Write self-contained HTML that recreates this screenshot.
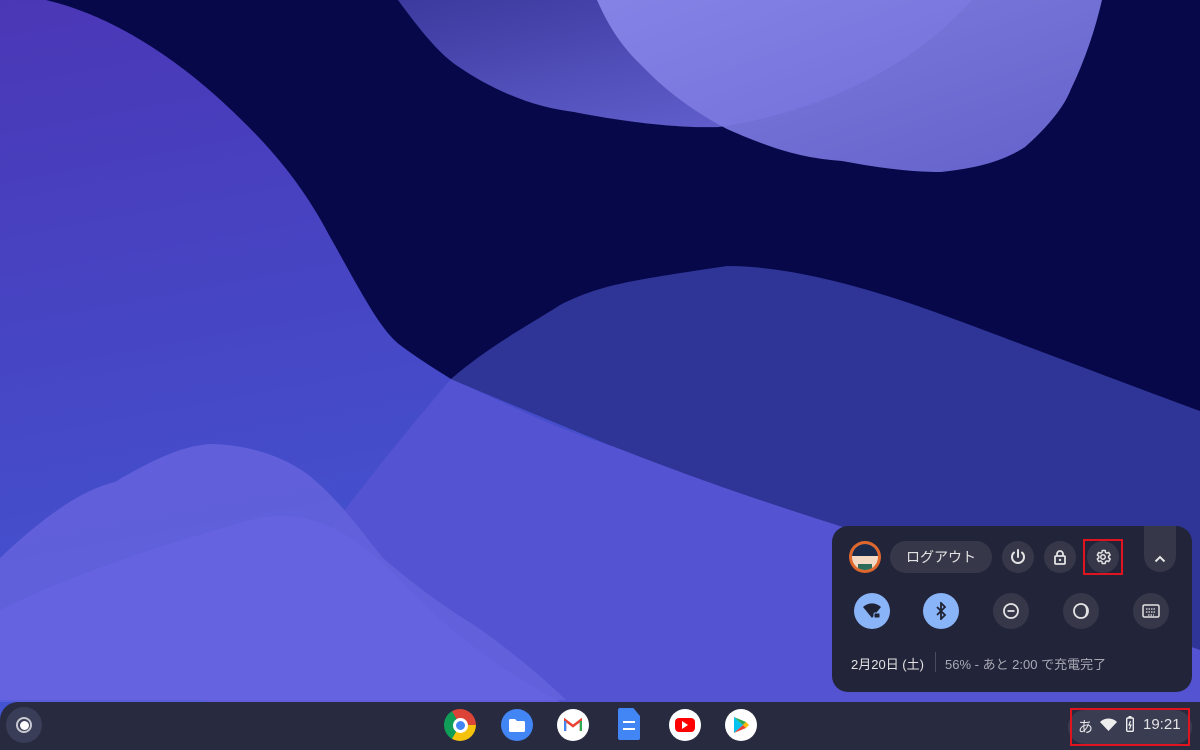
<!DOCTYPE html>
<html><head><meta charset="utf-8"><style>
*{margin:0;padding:0;box-sizing:border-box}
body{width:1200px;height:750px;overflow:hidden;position:relative;background:#07084a;font-family:"Liberation Sans","Noto Sans CJK JP",sans-serif}
.abs{position:absolute}
.panel{left:832px;top:526px;width:360px;height:166px;border-radius:16px;background:#22243a}
.c{position:absolute;border-radius:50%;display:flex;align-items:center;justify-content:center}
.dk{background:#363849}
.bl{background:#8ab4f8}
.shelf{left:0;top:702px;width:1200px;height:48px;background:#282a40;border-top-left-radius:18px}
</style></head><body>
<svg class="abs" style="left:0;top:0" width="1200" height="750" viewBox="0 0 1200 750">
<defs>
<linearGradient id="lg" x1="0" y1="0" x2="0.3" y2="1"><stop offset="0" stop-color="#4a37b6"/><stop offset="1" stop-color="#4259d6"/></linearGradient>
<linearGradient id="ta" x1="0" y1="0" x2="1" y2="1"><stop offset="0" stop-color="#3c3a9e"/><stop offset="1" stop-color="#6a68d8"/></linearGradient>
<linearGradient id="tb" x1="0" y1="0" x2="1" y2="1"><stop offset="0" stop-color="#8a88ea"/><stop offset="1" stop-color="#6c6ad6"/></linearGradient>
</defs>
<path d="M0 0 L46 0 C110 15 170 55 215 95 C265 140 300 180 329 235 C360 290 380 330 400 345 C420 360 440 372 451 379 L612 446 C700 480 765 504 956 562 L1200 650 L1200 750 L0 750 Z" fill="url(#lg)"/>
<path d="M451 379 C490 345 536 321 560 305 C600 285 627 281 727 266 C780 266 842 281 900 300 C960 320 995 335 1200 411 L1200 750 L700 750 L612 446 Z" fill="#2f3596"/>
<path d="M451 379 C520 410 560 430 612 446 C700 480 765 504 956 562 L1200 650 L1200 750 L170 750 C250 640 330 520 451 379 Z" fill="#5453d2"/>
<path d="M0 558 C40 520 80 490 115 482 C160 455 190 444 214 444 C260 446 290 462 306 473 C340 500 360 530 383 558 C420 590 450 610 474 625 C510 650 540 675 566 700 L0 700 Z" fill="#6462dc" opacity="0.9"/>
<path d="M0 610 C80 570 180 540 250 520 C330 500 380 560 420 600 C470 650 520 680 560 702 L0 702 Z" fill="#6966e2" opacity="0.6"/>
<path d="M398 0 C420 30 440 55 459 67 C500 95 540 108 574 112 C640 125 690 128 719 127 C800 115 900 80 972 0 Z" fill="url(#ta)"/>
<path d="M597 0 C610 30 625 50 643 67 C670 95 700 115 727 129 C770 148 800 158 842 161 C880 168 910 172 941 172 C980 168 1005 160 1025 147 C1050 125 1065 105 1071 89 C1085 60 1095 30 1102 0 Z" fill="url(#tb)" opacity="0.92"/>
</svg>

<div class="abs panel"></div>
<div class="c" style="left:849px;top:541px;width:32px;height:32px;background:#e0672c">
 <div style="width:26px;height:26px;border-radius:50%;background:#f3d9c4;position:relative;overflow:hidden"><div style="position:absolute;left:0;top:0;width:26px;height:12px;background:#1c2a4a"></div><div style="position:absolute;left:6px;top:20px;width:14px;height:6px;background:#2e6a5a"></div></div>
</div>
<div class="abs" style="left:890px;top:541px;width:102px;height:32px;border-radius:16px;background:#363849;color:#e3e3e3;font-size:14px;line-height:32px;text-align:center">ログアウト</div>
<div class="c dk" style="left:1002px;top:541px;width:32px;height:32px"><svg width="18" height="18" viewBox="0 0 18 18"><path d="M5 4.5a6 6 0 1 0 8 0" fill="none" stroke="#e3e3e3" stroke-width="2" stroke-linecap="round"/><path d="M9 2v7" stroke="#e3e3e3" stroke-width="2" stroke-linecap="round"/></svg></div>
<div class="c dk" style="left:1044px;top:541px;width:32px;height:32px"><svg width="16" height="16" viewBox="0 0 16 16"><path d="M5 7V5a3 3 0 0 1 6 0v2" fill="none" stroke="#e3e3e3" stroke-width="1.8"/><rect x="3" y="7" width="10" height="8" rx="1" fill="none" stroke="#e3e3e3" stroke-width="1.8"/><circle cx="8" cy="11" r="1.2" fill="#e3e3e3"/></svg></div>
<div class="c dk" style="left:1087px;top:541px;width:32px;height:32px"><svg width="18" height="18" viewBox="0 0 24 24"><path d="M19.4 13a7.5 7.5 0 0 0 0-2l2.1-1.6-2-3.5-2.5 1a7 7 0 0 0-1.7-1L15 3.3h-4l-.4 2.6a7 7 0 0 0-1.7 1l-2.5-1-2 3.5L6.5 11a7.5 7.5 0 0 0 0 2l-2.1 1.6 2 3.5 2.5-1a7 7 0 0 0 1.7 1l.4 2.6h4l.4-2.6a7 7 0 0 0 1.7-1l2.5 1 2-3.5z" fill="none" stroke="#e3e3e3" stroke-width="2" stroke-linejoin="round"/><circle cx="12" cy="12" r="3" fill="none" stroke="#e3e3e3" stroke-width="2"/></svg></div>
<div class="abs" style="left:1083px;top:539px;width:40px;height:36px;border:2px solid #e0141e"></div>
<div class="abs" style="left:1144px;top:526px;width:32px;height:46px;background:#363849;border-radius:0 0 16px 16px;display:flex;align-items:flex-end;justify-content:center;padding-bottom:9px"><svg width="12" height="8" viewBox="0 0 12 8"><path d="M1.5 6.5 6 2l4.5 4.5" fill="none" stroke="#e3e3e3" stroke-width="2"/></svg></div>

<div class="c bl" style="left:854px;top:593px;width:36px;height:36px"><svg width="20" height="18" viewBox="0 0 20 18"><path d="M1 5a13 13 0 0 1 18 0L10 16z" fill="#1f2235"/><rect x="12" y="11" width="6" height="5" rx="1" fill="#1f2235" stroke="#8ab4f8" stroke-width="1"/></svg></div>
<div class="c bl" style="left:923px;top:593px;width:36px;height:36px"><svg width="12" height="18" viewBox="0 0 12 18"><path d="M2 5l8 8-4 4V1l4 4-8 8" fill="none" stroke="#1f2235" stroke-width="1.8"/></svg></div>
<div class="c dk" style="left:993px;top:593px;width:36px;height:36px"><svg width="18" height="18" viewBox="0 0 18 18"><circle cx="9" cy="9" r="7" fill="none" stroke="#e3e3e3" stroke-width="1.8"/><path d="M5.5 9h7" stroke="#e3e3e3" stroke-width="1.8"/></svg></div>
<div class="c dk" style="left:1063px;top:593px;width:36px;height:36px"><svg width="18" height="18" viewBox="0 0 18 18"><circle cx="9" cy="9" r="7" fill="none" stroke="#e3e3e3" stroke-width="1.8"/><path d="M9 2a7 7 0 0 1 0 14a5 7 0 0 0 0-14z" fill="#e3e3e3"/></svg></div>
<div class="c dk" style="left:1133px;top:593px;width:36px;height:36px"><svg width="18" height="14" viewBox="0 0 18 14"><rect x="1" y="1" width="16" height="12" rx="1.5" fill="none" stroke="#e3e3e3" stroke-width="1.5"/><path d="M4 5h10M4 8h10M6 11h6" stroke="#e3e3e3" stroke-width="1.3" stroke-dasharray="1.5 1"/></svg></div>

<div class="abs" style="left:851px;top:654px;font-size:13px;color:#e3e3e3">2月20日 (土)</div>
<div class="abs" style="left:935px;top:652px;width:1px;height:20px;background:#4a4c60"></div>
<div class="abs" style="left:945px;top:654px;font-size:13px;color:#a9aab5">56% - あと 2:00 で充電完了</div>

<div class="abs shelf"></div>
<div class="c" style="left:6px;top:707px;width:36px;height:36px;background:#3a3d58"><div style="width:16px;height:16px;border-radius:50%;border:2px solid #c8c8d0;display:flex;align-items:center;justify-content:center"><div style="width:9px;height:9px;border-radius:50%;background:#fff"></div></div></div>

<div class="c" style="left:444px;top:709px;width:32px;height:32px;background:conic-gradient(from -30deg,#db4437 0 120deg,#f4c20d 120deg 240deg,#0f9d58 240deg 360deg)"><div style="width:15px;height:15px;border-radius:50%;background:#4285f4;border:3px solid #fff"></div></div>
<div class="c" style="left:501px;top:709px;width:32px;height:32px;background:#4285f4"><svg width="16" height="13" viewBox="0 0 16 13"><path d="M0 1.5A1.5 1.5 0 0 1 1.5 0H6l2 2h6.5A1.5 1.5 0 0 1 16 3.5v8a1.5 1.5 0 0 1-1.5 1.5h-13A1.5 1.5 0 0 1 0 11.5z" fill="#fff"/></svg></div>
<div class="c" style="left:557px;top:709px;width:32px;height:32px;background:#fff"><svg width="18" height="14" viewBox="0 0 18 14"><path d="M1 13V2l8 6 8-6v11" fill="none" stroke="#ea4335" stroke-width="2.5"/><path d="M1 13V3" stroke="#4285f4" stroke-width="2.5"/><path d="M17 13V3" stroke="#34a853" stroke-width="2.5"/></svg></div>
<div class="abs" style="left:618px;top:708px;width:22px;height:32px;background:#4285f4;border-radius:2px;clip-path:polygon(0 0,70% 0,100% 25%,100% 100%,0 100%)"><div style="margin:13px 5px 0;height:9px;border-top:2px solid #fff;border-bottom:2px solid #fff"></div></div>
<div class="c" style="left:669px;top:709px;width:32px;height:32px;background:#fff"><div style="width:20px;height:14px;background:#f00;border-radius:4px;display:flex;align-items:center;justify-content:center"><div style="width:0;height:0;border-left:6px solid #fff;border-top:4px solid transparent;border-bottom:4px solid transparent"></div></div></div>
<div class="c" style="left:725px;top:709px;width:32px;height:32px;background:#fff"><svg width="16" height="18" viewBox="0 0 16 18"><path d="M1 1l9 8-9 8z" fill="#00c3f0"/><path d="M1 1l9 8 3-3z" fill="#34a853"/><path d="M1 17l9-8 3 3z" fill="#ea4335"/><path d="M13 6l3 3-3 3-3-3z" fill="#fbbc05"/></svg></div>

<div class="abs" style="left:1068px;top:710px;width:124px;height:34px;border-radius:17px;background:#3a3c52"></div>
<div class="abs" style="left:1078px;top:716px;font-size:15px;color:#e3e3e3">あ</div>
<svg class="abs" style="left:1100px;top:718px" width="17" height="13" viewBox="0 0 17 13"><path d="M0 4a12 12 0 0 1 17 0L8.5 13z" fill="#eee"/></svg>
<svg class="abs" style="left:1126px;top:716px" width="8" height="16" viewBox="0 0 8 16"><rect x="0.7" y="2" width="6.6" height="13.3" rx="1" fill="none" stroke="#eee" stroke-width="1.4"/><rect x="2.5" y="0" width="3" height="2" fill="#eee"/><path d="M4.5 5 3 9h2l-1.5 4" stroke="#eee" stroke-width="1.2" fill="none"/></svg>
<div class="abs" style="left:1143px;top:716px;font-size:15px;color:#e3e3e3">19:21</div>
<div class="abs" style="left:1070px;top:708px;width:120px;height:38px;border:2px solid #e0141e"></div>
</body></html>
